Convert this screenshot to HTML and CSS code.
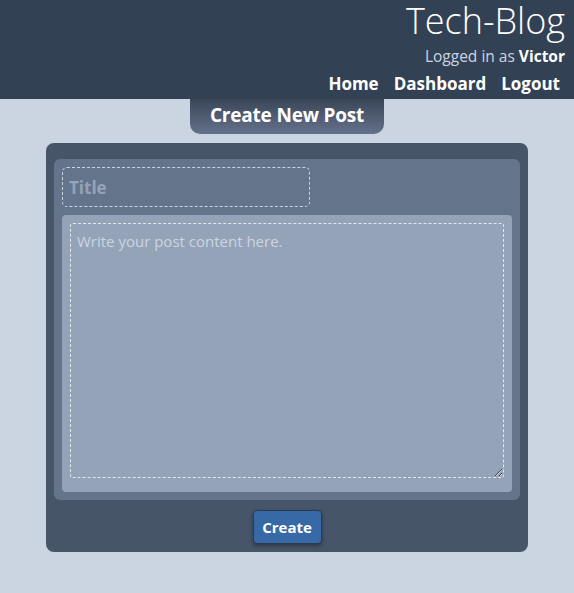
FILE: index.html
```html
<!DOCTYPE html>
<html lang="en">
<head>
<meta charset="utf-8">
<title>Tech-Blog</title>
<link rel="stylesheet" href="styles.css">
</head>
<body>
<header class="site-header">
  <h1 class="brand">Tech-Blog</h1>
  <p class="login">Logged in as <strong>Victor</strong></p>
  <nav class="nav">
    <a href="#">Home</a>
    <a href="#">Dashboard</a>
    <a href="#">Logout</a>
  </nav>
</header>
<main class="main">
  <h2 class="tab">Create New Post</h2>
  <form class="card">
    <div class="panel">
      <input class="title-input" type="text" placeholder="Title">
      <div class="content-wrap">
        <textarea class="content" placeholder="Write your post content here."></textarea>
      </div>
    </div>
    <button class="btn" type="button">Create</button>
  </form>
</main>
</body>
</html>
```
FILE: styles.css
```css
* { box-sizing: border-box; }
body {
  margin: 0;
  background: #cbd5e1;
  font-family: "Open Sans", "Noto Sans", sans-serif;
}
.site-header {
  background: #334155;
  height: 99px;
  text-align: right;
  padding: 0 9px 0 0;
  color: #fff;
}
.brand {
  margin: 0;
  font-size: 36px;
  font-weight: 300;
  line-height: 42px;
}
.login {
  margin: 4px 0 0;
  font-size: 15.5px;
  line-height: 20px;
  color: #cbd5e1;
}
.login strong { color: #fff; font-weight: 700; }
.nav {
  display: flex;
  justify-content: flex-end;
  gap: 15px;
  padding-right: 5px;
  margin-top: 6px;
}
.nav a {
  color: #fff;
  text-decoration: none;
  font-weight: 700;
  font-size: 17px;
  line-height: 24px;
}
.main {
  display: flex;
  flex-direction: column;
  align-items: center;
}
.tab {
  margin: 0;
  width: 194px;
  height: 35px;
  text-align: center;
  font-size: 19px;
  letter-spacing: -0.2px;
  line-height: 32px;
  font-weight: 700;
  color: #fff;
  background: linear-gradient(#3a4759, #64718a);
  border-radius: 0 0 10px 10px;
}
.card {
  margin-top: 9px;
  width: 482px;
  background: #475569;
  border-radius: 8px;
  padding: 16px 8px 8px;
  display: flex;
  flex-direction: column;
  align-items: center;
}
.panel {
  width: 100%;
  background: #64748b;
  border-radius: 6px;
  padding: 8px;
  display: flex;
  flex-direction: column;
  gap: 8px;
}
.title-input {
  width: 248px;
  height: 40px;
  background: transparent;
  border: 1px dashed #cbd5e1;
  border-radius: 5px;
  padding: 0 6px;
  font-family: inherit;
  font-size: 17px;
  font-weight: 700;
  color: #fff;
  outline: none;
}
.title-input::placeholder { color: #94a3b8; }
.content-wrap {
  background: #94a3b8;
  border-radius: 4px;
  padding: 8px 8px 14px;
}
.content {
  display: block;
  width: 100%;
  height: 255px;
  background: transparent;
  border: 1px dashed #e2e8f0;
  border-radius: 3px;
  padding: 7px 6px;
  font-family: inherit;
  font-size: 15px;
  color: #fff;
  outline: none;
  resize: vertical;
}
.content::placeholder { color: #cbd5e1; }
.btn {
  margin-top: 10px;
  width: 69px;
  height: 34px;
  background: #3669a5;
  color: #fff;
  border: 1px solid #2b3a4e;
  border-radius: 4px;
  font-family: inherit;
  font-size: 15px;
  font-weight: 700;
  box-shadow: 0 2px 4px rgba(0,0,0,0.35);
}
```
